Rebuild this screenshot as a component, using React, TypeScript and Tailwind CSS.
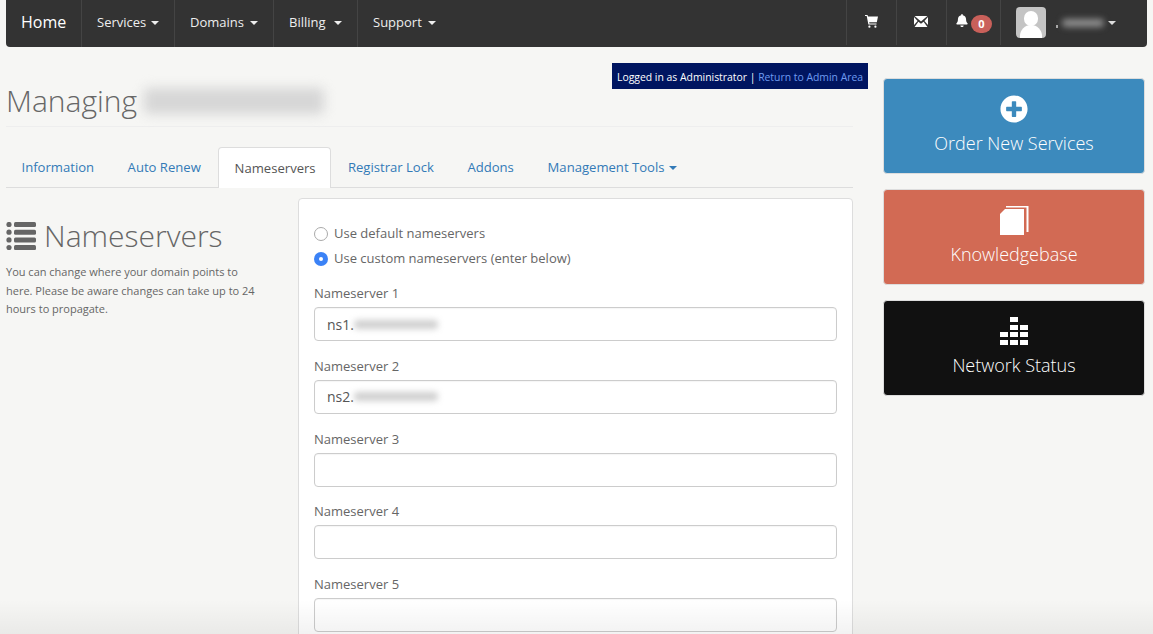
import { FaBell, FaPlusCircle } from "react-icons/fa";

const navItems = [
  { label: "Services", w: "w-[93px]", gap: "ml-[5px]", border: "border-r" },
  { label: "Domains", w: "w-[99px]", gap: "ml-[6px]", border: "border-r" },
  { label: "Billing", w: "w-[84px]", gap: "ml-[8px]", border: "border-r" },
  { label: "Support", w: "w-[94px]", gap: "ml-[6px]", border: "" },
];

const tabs = ["Information", "Auto Renew", "Nameservers", "Registrar Lock", "Addons"];

function Caret({ className }: { className?: string }) {
  return <span className={`inline-block h-0 w-0 border-x-[4px] border-t-[4px] border-x-transparent border-t-current align-middle ${className ?? ""}`} />;
}

function Blur({ className }: { className: string }) {
  return <span className={`block rounded-sm ${className}`} />;
}

function CartIcon() {
  return (
    <svg width="13" height="13" viewBox="0 0 13 13" fill="white">
      <path d="M0 0h2.5l.5 1.5H13l-1.2 5.8H4.2l.2 1.2H11.5v1H3.4L1.7 1H0z" />
      <circle cx="4.4" cy="11.7" r="1.1" />
      <circle cx="10.4" cy="11.7" r="1.1" />
    </svg>
  );
}

function MailIcon() {
  return (
    <svg className="-ml-[2px]" width="14" height="11" viewBox="0 0 14 11" fill="white">
      <path d="M0.6 0h12.8L7 5.6z" />
      <path d="M0 1l3.6 3.9L0 9z" />
      <path d="M14 1l-3.6 3.9L14 9z" />
      <path d="M4.4 5.7L7 7.8l2.6-2.1L13.4 11H0.6z" />
    </svg>
  );
}

function ListIcon() {
  const rows = [0, 7.7, 15.4, 23.1];
  return (
    <svg width="31" height="28" viewBox="0 0 31 28" fill="#666">
      {rows.map((y) => (
        <g key={y}>
          <circle cx="3" cy={y + 2.5} r="2.6" />
          <rect x="8" y={y} width="22" height="5" rx="1.5" />
        </g>
      ))}
    </svg>
  );
}

function BookIcon() {
  return (
    <svg width="29" height="29" viewBox="0 0 29 29" fill="white">
      <path d="M5 3h19v26H0V8z" />
      <path d="M6 0H28.5V26H26.5V1.5H6z" />
    </svg>
  );
}

function BarsIcon() {
  const cells = [
    [10, 0], [10, 8], [20, 8], [0, 15], [10, 15], [20, 15], [0, 23], [10, 23], [20, 23],
  ];
  return (
    <svg className="-mt-[1px] -ml-[1px]" width="28" height="28" viewBox="0 0 28 28" fill="white">
      {cells.map(([x, y]) => (
        <rect key={`${x}-${y}`} x={x} y={y} width="8" height="5" />
      ))}
    </svg>
  );
}

function NavIconCell({ w, className, children }: { w: string; className?: string; children: React.ReactNode }) {
  return <div className={`flex h-[45px] ${w} items-center border-l border-[#444] ${className ?? "justify-center"}`}>{children}</div>;
}

function Navbar() {
  return (
    <nav className="flex h-[47px] items-stretch rounded-b-sm bg-[#333] text-white">
      <div className="flex w-[76px] items-center border-r border-[#444] pb-[3px] pl-[15px] text-[16px] leading-none">Home</div>
      {navItems.map((item) => (
        <div key={item.label} className={`flex ${item.w} items-center ${item.border} border-[#444] pb-[2px] pl-[15px] text-[13px] text-[#eee]`}>
          {item.label}
          <Caret className={item.gap} />
        </div>
      ))}
      <div className="ml-auto flex">
        <NavIconCell w="w-[50px]">
          <div className="-mt-[3px]">
            <CartIcon />
          </div>
        </NavIconCell>
        <NavIconCell w="w-[50px]">
          <div className="-mt-[2px]">
            <MailIcon />
          </div>
        </NavIconCell>
        <NavIconCell w="w-[54px]" className="justify-start pl-[9px]">
          <FaBell className="-mt-[5px] h-[13px] w-[12px]" />
          <span className="ml-[3px] mt-[3px] flex h-[18px] w-[21px] items-center justify-center rounded-[9px] bg-[#c9605a] text-[11px] font-bold">0</span>
        </NavIconCell>
        <div className="flex h-[45px] w-[147px] items-center border-l border-[#444] pl-[15px]">
          <div className="relative h-[31px] w-[30px] overflow-hidden rounded-sm bg-[#c4c4c4]">
            <span className="absolute left-[8px] top-[4px] h-[15px] w-[14px] rounded-full bg-white" />
            <span className="absolute left-[4px] top-[18px] h-[16px] w-[22px] rounded-t-xl bg-white" />
          </div>
          <span className="ml-[10px] mt-[7px] h-[3px] w-[2px] bg-[#aaa]" />
          <Blur className="ml-[4px] h-[8px] w-[42px] bg-[#8f8f8f] blur-[3px]" />
          <Caret className="ml-[4px] text-[#ddd]" />
        </div>
      </div>
    </nav>
  );
}

function Tabs() {
  return (
    <div className="mt-[20px] flex h-[41px] border-b border-[#ddd] text-[13.1px] text-[#337ab7]">
      {tabs.map((t) =>
        t === "Nameservers" ? (
          <div key={t} className="flex h-[41px] items-center rounded-t border border-b-0 border-[#ddd] bg-white pl-[16px] pr-[14.5px] pt-[1px] text-[#555]">
            {t}
          </div>
        ) : (
          <div key={t} className="flex items-center px-[16.75px] pt-[1px] first:pl-[15.5px]">
            {t}
          </div>
        ),
      )}
      <div className="flex items-center px-[17px] pt-[1px]">
        Management Tools
        <Caret className="ml-[5px]" />
      </div>
    </div>
  );
}

function Field({ n, prefix, first }: { n: number; prefix?: string; first?: boolean }) {
  return (
    <div className={first ? "mt-[14px]" : "mt-[16.75px]"}>
      <label className="block h-[18px] text-[13px] leading-[16px] text-[#666]">Nameserver {n}</label>
      <div className="mt-[4px] flex h-[34px] items-center rounded border border-[#ccc] bg-white px-[12px] text-[14px] text-[#555] shadow-[inset_0_1px_1px_rgba(0,0,0,0.04)]">
        {prefix && (
          <>
            {prefix}
            <Blur className="h-[9px] w-[84px] bg-[#cfcfcf] blur-[3px]" />
          </>
        )}
      </div>
    </div>
  );
}

function Radio({ checked, label }: { checked?: boolean; label: string }) {
  return (
    <div className="flex h-[25px] items-center text-[13px] text-[#666]">
      {checked ? (
        <span className="mr-[6px] flex h-[14px] w-[14px] items-center justify-center rounded-full bg-[#3b82f6]">
          <span className="h-[4px] w-[4px] rounded-full bg-white" />
        </span>
      ) : (
        <span className="mr-[6px] h-[14px] w-[14px] rounded-full border border-[#aaa] bg-white" />
      )}
      {label}
    </div>
  );
}

function SideCard({ bg, icon, label }: { bg: string; icon: React.ReactNode; label: string }) {
  return (
    <div className={`flex h-[96px] flex-col items-center rounded-sm border border-[#ddd] ${bg} pt-[15px] text-white`}>
      <div className="flex h-[30px] items-center">{icon}</div>
      <div className="mt-[6px] text-[18px] font-light leading-[26px]">{label}</div>
    </div>
  );
}

export default function App() {
  return (
    <div className="relative h-[634px] overflow-hidden bg-[#f6f6f4] px-[6px] font-['Open_Sans',sans-serif]">
      <Navbar />
      <div className="absolute left-[612px] top-[63px] flex h-[26px] w-[256px] items-center whitespace-nowrap bg-[#001560] pl-[5px] pt-[3px] text-[10.4px] text-white">
        <span className="font-medium">Logged in as Administrator</span>&nbsp;|&nbsp;<span className="text-[#6f9bf0]">Return to Admin Area</span>
      </div>
      <div className="flex gap-[30px]">
        <main className="w-[847px]">
          <div className="mt-[33px] flex h-[47px] items-center border-b border-[#eee] pb-[4px]">
            <h1 className="text-[30px] font-light leading-none text-[#666]">Managing</h1>
            <Blur className="ml-[7px] h-[26px] w-[180px] bg-[#d6d6d6] blur-[6px]" />
          </div>
          <Tabs />
          <div className="mt-[10px] flex">
            <div className="w-[292px] pt-[23px]">
              <h2 className="flex items-center text-[30px] font-light leading-none text-[#666]">
                <ListIcon />
                <span className="ml-[7px]">Nameservers</span>
              </h2>
              <p className="mt-[12px] w-[256px] text-[11px] leading-[18.5px] text-[#666]">
                You can change where your domain points to here. Please be aware changes can take up to 24 hours to propagate.
              </p>
            </div>
            <div className="h-[600px] w-[555px] rounded border border-[#ddd] bg-white px-[15px] pt-[22px]">
              <Radio label="Use default nameservers" />
              <Radio checked label="Use custom nameservers (enter below)" />
              <Field first n={1} prefix="ns1." />
              <Field n={2} prefix="ns2." />
              <Field n={3} />
              <Field n={4} />
              <Field n={5} />
            </div>
          </div>
        </main>
        <aside className="mt-[31px] flex w-[262px] flex-col gap-[15px]">
          <SideCard bg="bg-[#3c8abd]" icon={<FaPlusCircle className="h-[28px] w-[28px]" />} label="Order New Services" />
          <SideCard bg="bg-[#d26a54]" icon={<BookIcon />} label="Knowledgebase" />
          <SideCard bg="bg-[#111]" icon={<BarsIcon />} label="Network Status" />
        </aside>
      </div>
      <div className="pointer-events-none absolute inset-x-0 bottom-0 h-[34px] bg-gradient-to-b from-transparent to-black/5" />
    </div>
  );
}
